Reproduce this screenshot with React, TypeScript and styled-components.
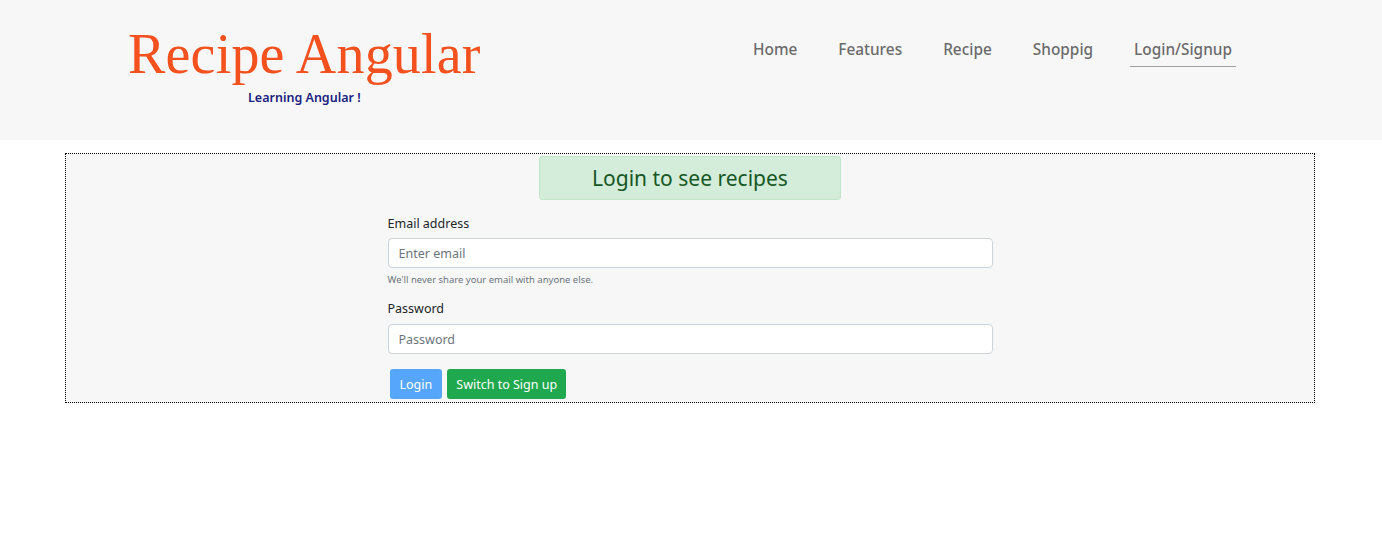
import React from "react";
import styled, { createGlobalStyle } from "styled-components";

const Global = createGlobalStyle`
  html, body { margin: 0; padding: 0; background: #ffffff; }
  body { font-family: "Noto Sans", "Open Sans", sans-serif; color: #212529; }
  * { box-sizing: border-box; }
`;

const Header = styled.header`
  height: 140px;
  background: #f7f7f7;
  display: flex;
  justify-content: space-between;
  align-items: flex-start;
  padding: 0 146px 0 128px;
`;

const Brand = styled.div`
  display: flex;
  flex-direction: column;
  align-items: center;
  padding-top: 21px;
`;

const Title = styled.h1`
  margin: 0;
  font-family: "Liberation Serif", "DejaVu Serif", serif;
  font-weight: 400;
  font-size: 56px;
  line-height: 66px;
  color: #f4511e;
  letter-spacing: 0.2px;
`;

const Subtitle = styled.div`
  margin-top: 3px;
  font-size: 12.5px;
  font-weight: 600;
  color: #1a237e;
  line-height: 16px;
`;

const Nav = styled.nav`
  display: flex;
  gap: 33px;
  padding-top: 38px;
`;

const NavLink = styled.a<{ $active?: boolean }>`
  display: block;
  padding: 0 4px 4px;
  font-size: 15.4px;
  font-weight: 500;
  line-height: 24px;
  color: #6b6b6b;
  text-decoration: none;
  border-bottom: 1px solid ${(p) => (p.$active ? "#a0a0a0" : "transparent")};
`;

const Box = styled.main`
  width: 1250px;
  margin: 13px 0 0 65px;
  border: 1px dotted #000;
  background: #f7f7f7;
  display: flex;
  flex-direction: column;
  align-items: center;
  padding: 2px 0 3px;
`;

const Alert = styled.div`
  width: 302px;
  height: 44px;
  display: flex;
  align-items: center;
  justify-content: center;
  background: #d4edda;
  border: 1px solid #c3e6cb;
  border-radius: 3px;
  color: #155724;
  font-size: 21px;
`;

const Form = styled.form`
  width: 605px;
  display: flex;
  flex-direction: column;
`;

const Label = styled.label<{ $mt: number }>`
  margin-top: ${(p) => p.$mt}px;
  font-size: 12.5px;
  line-height: 18px;
  color: #212529;
`;

const Input = styled.input<{ $mt: number }>`
  margin-top: ${(p) => p.$mt}px;
  height: 30px;
  width: 100%;
  border: 1px solid #ced4da;
  border-radius: 4px;
  background: #fff;
  padding: 0 10px;
  font-family: inherit;
  font-size: 12.5px;
  color: #495057;
  outline: none;
  &::placeholder { color: #6c757d; }
`;

const Hint = styled.small`
  margin-top: 5px;
  font-size: 9.5px;
  line-height: 14px;
  color: #6c757d;
`;

const Actions = styled.div`
  margin-top: 15px;
  display: flex;
  gap: 5px;
  padding-left: 2px;
`;

const Button = styled.button<{ $variant: "primary" | "success" }>`
  height: 30px;
  padding: 0 ${(p) => (p.$variant === "primary" ? 10 : 9)}px;
  border: none;
  border-radius: 3px;
  font-family: inherit;
  font-size: 12.5px;
  color: #fff;
  background: ${(p) => (p.$variant === "primary" ? "#56a6fc" : "#20a84f")};
  cursor: pointer;
`;

export default function App() {
  return (
    <>
      <Global />
      <Header>
        <Brand>
          <Title>Recipe Angular</Title>
          <Subtitle>Learning Angular !</Subtitle>
        </Brand>
        <Nav>
          <NavLink>Home</NavLink>
          <NavLink>Features</NavLink>
          <NavLink>Recipe</NavLink>
          <NavLink>Shoppig</NavLink>
          <NavLink $active>Login/Signup</NavLink>
        </Nav>
      </Header>
      <Box>
        <Alert>Login to see recipes</Alert>
        <Form onSubmit={(e) => e.preventDefault()}>
          <Label $mt={15}>Email address</Label>
          <Input $mt={5} type="email" placeholder="Enter email" />
          <Hint>We'll never share your email with anyone else.</Hint>
          <Label $mt={13}>Password</Label>
          <Input $mt={6} type="password" placeholder="Password" />
          <Actions>
            <Button type="button" $variant="primary">Login</Button>
            <Button type="button" $variant="success">Switch to Sign up</Button>
          </Actions>
        </Form>
      </Box>
    </>
  );
}
